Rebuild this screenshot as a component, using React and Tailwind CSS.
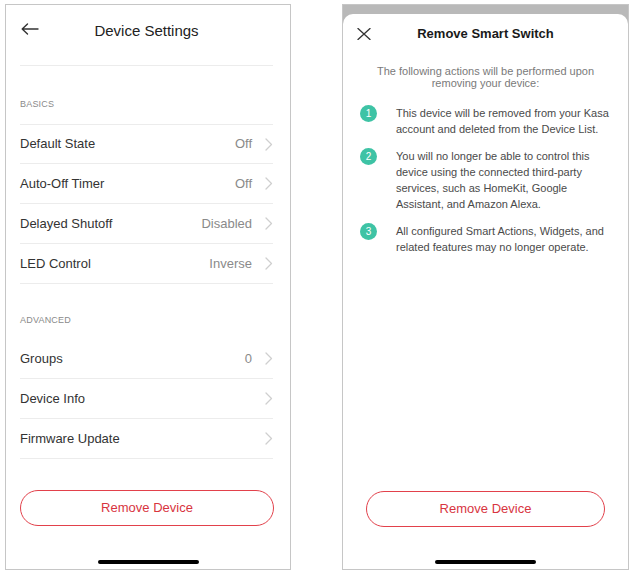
import React from 'react';

const basics = [
  { label: 'Default State', value: 'Off' },
  { label: 'Auto-Off Timer', value: 'Off' },
  { label: 'Delayed Shutoff', value: 'Disabled' },
  { label: 'LED Control', value: 'Inverse' },
];

const advanced = [
  { label: 'Groups', value: '0' },
  { label: 'Device Info', value: '' },
  { label: 'Firmware Update', value: '' },
];

const steps = [
  'This device will be removed from your Kasa account and deleted from the Device List.',
  'You will no longer be able to control this device using the connected third-party services, such as HomeKit, Google Assistant, and Amazon Alexa.',
  'All configured Smart Actions, Widgets, and related features may no longer operate.',
];

function Chevron() {
  return (
    <svg width="8" height="13" viewBox="0 0 8 13" fill="none" className="shrink-0">
      <path d="M1 1l5.5 5.5L1 12" stroke="#cfcfcf" strokeWidth="1.3" strokeLinecap="round" strokeLinejoin="round" />
    </svg>
  );
}

function Row({ label, value, top }) {
  return (
    <div className={`flex h-[40px] items-center border-b border-[#ececec] ${top ? 'border-t' : ''}`}>
      <span className="flex-1 text-[13px] text-[#333]">{label}</span>
      {value && <span className="mr-[13px] text-[13px] text-[#8a8a8a]">{value}</span>}
      <Chevron />
    </div>
  );
}

function HomeBar({ gap }) {
  return <div className={`mx-auto mb-[5px] h-[4px] w-[101px] rounded-full bg-black ${gap}`} />;
}

function DeviceSettings() {
  return (
    <div className="flex h-[566px] w-[286px] flex-col border border-[#c6c6c6] bg-white">
      <div className="ml-[14px] mr-[17px]">
        <div className="h-[61px] border-b border-[#ececec]">
          <div className="relative flex h-[52px] items-center justify-center">
            <svg width="18" height="12" viewBox="0 0 18 12" fill="none" className="absolute left-[1px] top-[18px]">
              <path d="M17 6H1.5M6.5 1L1.2 6l5.3 5" stroke="#333" strokeWidth="1.4" strokeLinecap="round" strokeLinejoin="round" />
            </svg>
            <span className="text-[15px] text-[#222]">Device Settings</span>
          </div>
        </div>
        <div className="pt-[32px] pb-[14px] text-[9px] leading-[12px] tracking-[0.2px] text-[#8a8a8a]">BASICS</div>
        {basics.map((r, i) => (
          <Row key={r.label} {...r} top={i === 0} />
        ))}
        <div className="pt-[30px] pb-[13px] text-[9px] leading-[12px] tracking-[0.2px] text-[#8a8a8a]">ADVANCED</div>
        {advanced.map((r) => (
          <Row key={r.label} {...r} />
        ))}
      </div>
      <div className="mt-auto">
        <div className="ml-[14px] flex h-[36px] w-[254px] items-center justify-center rounded-full border-[1.5px] border-[#e2414b] text-[13px] text-[#d8353f]">
          Remove Device
        </div>
        <HomeBar gap="mt-[34px]" />
      </div>
    </div>
  );
}

function RemoveSwitch() {
  return (
    <div className="flex h-[566px] w-[287px] flex-col border border-[#c6c6c6] bg-[#b9b9b9]">
      <div className="mt-[9px] flex flex-1 flex-col rounded-t-[10px] bg-white">
        <div className="relative flex h-[40px] items-center justify-center">
          <svg width="14" height="12" viewBox="0 0 14 12" fill="none" className="absolute left-[14px] top-[14px]">
            <path d="M1 0.5l12 11M13 0.5l-12 11" stroke="#333" strokeWidth="1.3" strokeLinecap="round" />
          </svg>
          <span className="text-[13px] font-semibold text-[#1a1a1a]">Remove Smart Switch</span>
        </div>
        <p className="mt-[11px] px-[24px] text-center text-[11px] leading-[12px] text-[#7a7a7a]">
          The following actions will be performed upon removing your device:
        </p>
        <div className="mt-[16px] flex flex-col gap-[11px] pl-[17px] pr-[14px]">
          {steps.map((s, i) => (
            <div key={i} className="flex items-start">
              <div className="flex h-[17px] w-[17px] shrink-0 items-center justify-center rounded-full bg-[#3ec3a5] text-[10px] text-white">
                {i + 1}
              </div>
              <p className="ml-[19px] text-[11px] leading-[16px] text-[#4a4a4a]">{s}</p>
            </div>
          ))}
        </div>
        <div className="mt-auto">
          <div className="mx-auto flex h-[36px] w-[239px] items-center justify-center rounded-full border-[1.5px] border-[#e2414b] text-[13px] text-[#d8353f]">
            Remove Device
          </div>
          <HomeBar gap="mt-[33px]" />
        </div>
      </div>
    </div>
  );
}

export default function App() {
  return (
    <div className="flex h-[580px] w-[636px] bg-white pt-[4px] pl-[5px] font-['Liberation_Sans',Arial,sans-serif]">
      <DeviceSettings />
      <div className="ml-[51px]">
        <RemoveSwitch />
      </div>
    </div>
  );
}
